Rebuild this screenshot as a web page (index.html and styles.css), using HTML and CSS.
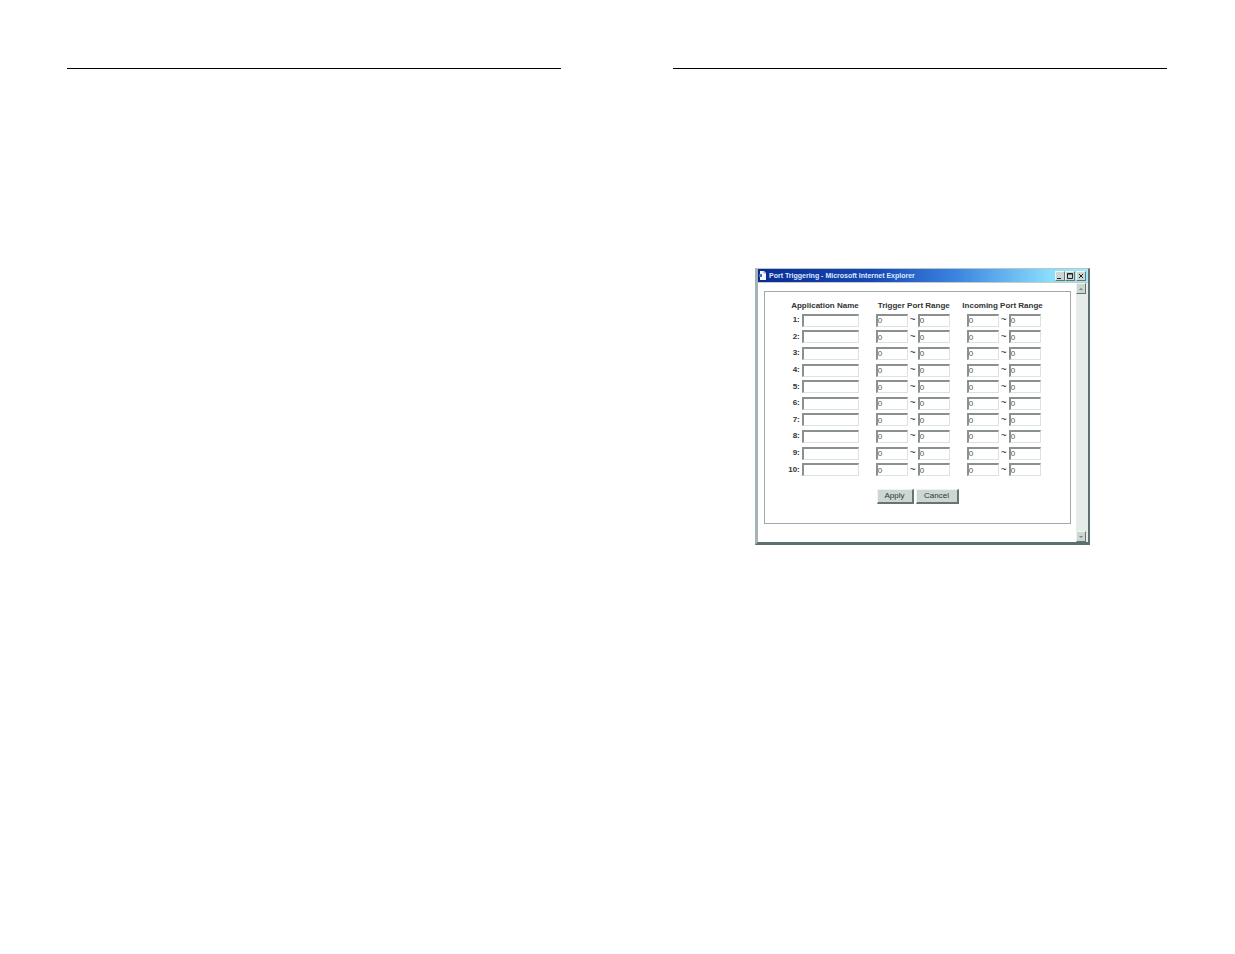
FILE: index.html
```html
<!DOCTYPE html>
<html lang="en">
<head>
    <meta charset="UTF-8">
    <title>Port Triggering</title>
    <link rel="stylesheet" href="styles.css">
</head>
<body>
<div class="spread">
    <section class="page"></section>
    <section class="page">
        <div class="window">
            <div class="title-bar">
                <svg class="title-icon" viewBox="0 0 9 11">
                    <path d="M2 1h4l2 2v7H2z" fill="#f4f8ff"></path>
                    <path d="M1 4h3v3H1z" fill="#3c6ccc"></path>
                    <path d="M6 1v2h2" fill="none" stroke="#8aa0d0"></path>
                </svg>
                <span class="title">Port Triggering - Microsoft Internet Explorer</span>
                <button class="win-btn" type="button" aria-label="Minimize">
                    <svg viewBox="0 0 8 8"><path d="M1 6.5h4" stroke="#1c2424"></path></svg>
                </button>
                <button class="win-btn" type="button" aria-label="Maximize">
                    <svg viewBox="0 0 8 8"><path d="M1.5 1.5h5v5h-5zM1 2h6" fill="none" stroke="#1c2424"></path></svg>
                </button>
                <button class="win-btn win-close" type="button" aria-label="Close">
                    <svg viewBox="0 0 8 8"><path d="M2 2l4 4M6 2l-4 4" stroke="#1c2424"></path></svg>
                </button>
            </div>
            <div class="viewport">
                <form class="panel">
                    <table class="ports">
                        <thead>
                        <tr>
                            <th>Application Name</th>
                            <th>Trigger Port Range</th>
                            <th>Incoming Port Range</th>
                        </tr>
                        </thead>
                        <tbody>
                        <tr>
                            <td><div class="field"><label for="app1">1:</label><input class="name" id="app1" type="text"></div></td>
                            <td><div class="field"><input aria-label="Trigger 1 from" type="text" value="0"><span>~</span><input aria-label="Trigger 1 to" type="text" value="0"></div></td>
                            <td><div class="field"><input aria-label="Incoming 1 from" type="text" value="0"><span>~</span><input aria-label="Incoming 1 to" type="text" value="0"></div></td>
                        </tr>
                        <tr>
                            <td><div class="field"><label for="app2">2:</label><input class="name" id="app2" type="text"></div></td>
                            <td><div class="field"><input aria-label="Trigger 2 from" type="text" value="0"><span>~</span><input aria-label="Trigger 2 to" type="text" value="0"></div></td>
                            <td><div class="field"><input aria-label="Incoming 2 from" type="text" value="0"><span>~</span><input aria-label="Incoming 2 to" type="text" value="0"></div></td>
                        </tr>
                        <tr>
                            <td><div class="field"><label for="app3">3:</label><input class="name" id="app3" type="text"></div></td>
                            <td><div class="field"><input aria-label="Trigger 3 from" type="text" value="0"><span>~</span><input aria-label="Trigger 3 to" type="text" value="0"></div></td>
                            <td><div class="field"><input aria-label="Incoming 3 from" type="text" value="0"><span>~</span><input aria-label="Incoming 3 to" type="text" value="0"></div></td>
                        </tr>
                        <tr>
                            <td><div class="field"><label for="app4">4:</label><input class="name" id="app4" type="text"></div></td>
                            <td><div class="field"><input aria-label="Trigger 4 from" type="text" value="0"><span>~</span><input aria-label="Trigger 4 to" type="text" value="0"></div></td>
                            <td><div class="field"><input aria-label="Incoming 4 from" type="text" value="0"><span>~</span><input aria-label="Incoming 4 to" type="text" value="0"></div></td>
                        </tr>
                        <tr>
                            <td><div class="field"><label for="app5">5:</label><input class="name" id="app5" type="text"></div></td>
                            <td><div class="field"><input aria-label="Trigger 5 from" type="text" value="0"><span>~</span><input aria-label="Trigger 5 to" type="text" value="0"></div></td>
                            <td><div class="field"><input aria-label="Incoming 5 from" type="text" value="0"><span>~</span><input aria-label="Incoming 5 to" type="text" value="0"></div></td>
                        </tr>
                        <tr>
                            <td><div class="field"><label for="app6">6:</label><input class="name" id="app6" type="text"></div></td>
                            <td><div class="field"><input aria-label="Trigger 6 from" type="text" value="0"><span>~</span><input aria-label="Trigger 6 to" type="text" value="0"></div></td>
                            <td><div class="field"><input aria-label="Incoming 6 from" type="text" value="0"><span>~</span><input aria-label="Incoming 6 to" type="text" value="0"></div></td>
                        </tr>
                        <tr>
                            <td><div class="field"><label for="app7">7:</label><input class="name" id="app7" type="text"></div></td>
                            <td><div class="field"><input aria-label="Trigger 7 from" type="text" value="0"><span>~</span><input aria-label="Trigger 7 to" type="text" value="0"></div></td>
                            <td><div class="field"><input aria-label="Incoming 7 from" type="text" value="0"><span>~</span><input aria-label="Incoming 7 to" type="text" value="0"></div></td>
                        </tr>
                        <tr>
                            <td><div class="field"><label for="app8">8:</label><input class="name" id="app8" type="text"></div></td>
                            <td><div class="field"><input aria-label="Trigger 8 from" type="text" value="0"><span>~</span><input aria-label="Trigger 8 to" type="text" value="0"></div></td>
                            <td><div class="field"><input aria-label="Incoming 8 from" type="text" value="0"><span>~</span><input aria-label="Incoming 8 to" type="text" value="0"></div></td>
                        </tr>
                        <tr>
                            <td><div class="field"><label for="app9">9:</label><input class="name" id="app9" type="text"></div></td>
                            <td><div class="field"><input aria-label="Trigger 9 from" type="text" value="0"><span>~</span><input aria-label="Trigger 9 to" type="text" value="0"></div></td>
                            <td><div class="field"><input aria-label="Incoming 9 from" type="text" value="0"><span>~</span><input aria-label="Incoming 9 to" type="text" value="0"></div></td>
                        </tr>
                        <tr>
                            <td><div class="field"><label for="app10">10:</label><input class="name" id="app10" type="text"></div></td>
                            <td><div class="field"><input aria-label="Trigger 10 from" type="text" value="0"><span>~</span><input aria-label="Trigger 10 to" type="text" value="0"></div></td>
                            <td><div class="field"><input aria-label="Incoming 10 from" type="text" value="0"><span>~</span><input aria-label="Incoming 10 to" type="text" value="0"></div></td>
                        </tr>
                        </tbody>
                    </table>
                    <div class="actions">
                        <button class="apply" type="button">Apply</button>
                        <button class="cancel" type="button">Cancel</button>
                    </div>
                </form>
                <div class="scrollbar">
                    <button type="button" aria-label="Scroll up">
                        <svg viewBox="0 0 8 8"><path d="M2 5h4L4 3z" fill="#788482"></path></svg>
                    </button>
                    <button type="button" aria-label="Scroll down">
                        <svg viewBox="0 0 8 8"><path d="M2 3h4L4 5z" fill="#788482"></path></svg>
                    </button>
                </div>
            </div>
        </div>
    </section>
</div>
</body>
</html>
```

FILE: styles.css
```css
* {
    box-sizing: border-box;
}

body {
    margin: 0;
    background: #ffffff;
    font-family: "Liberation Sans", Arial, sans-serif;
    font-size: 8px;
    line-height: 10px;
    color: #303434;
}

.spread {
    display: grid;
    grid-template-columns: 1fr 1fr;
    gap: 112px;
    padding: 68px 68px 0 67px;
}

.page {
    border-top: 1px solid #000000;
}

/* browser window */
.window {
    width: 335px;
    margin: 199px 0 0 82px;
    border: solid;
    border-width: 1px 2px 3px 3px;
    border-color: #b4c8cc #5c7072 #5c7072 #a4b4b4;
}

.title-bar {
    display: flex;
    align-items: center;
    height: 13px;
    padding-right: 2px;
    background: linear-gradient(to right, #0a2c90, #1848b4 35%, #3c84e0 60%, #88dcfc 88%, #a4e8fc);
}

.title-icon {
    width: 9px;
    height: 11px;
    margin-right: 2px;
}

.title {
    flex: 1;
    font-size: 7px;
    font-weight: bold;
    white-space: nowrap;
    color: #dceaff;
}

button {
    padding: 0;
    font: inherit;
    color: inherit;
    border: 1px solid;
    border-color: #eef4f2 #68746f #68746f #eef4f2;
    background: #ccd6d2;
}

.win-btn {
    width: 10px;
    height: 10px;
}

.win-close {
    margin-left: 1px;
}

button svg {
    display: block;
    width: 8px;
    height: 8px;
}

.viewport {
    display: flex;
    justify-content: space-between;
    border-top: 1px solid #c4cccc;
}

.panel {
    flex: 1;
    margin: 8px 5px 18px 6px;
    padding: 8px 0 19px;
    border: 1px solid #a0aaa8;
}

.ports {
    height: 178px;
    margin: 0 auto;
    border-collapse: collapse;
}

.ports th {
    height: 12px;
    padding: 0;
    text-align: right;
    white-space: nowrap;
}

.ports td {
    padding: 0 0 0 17px;
}

.ports td:first-child {
    padding-left: 0;
}

.ports th:last-child {
    padding-right: 4px;
}

.ports td:last-child {
    padding-right: 6px;
}

.field {
    display: flex;
    align-items: center;
    justify-content: flex-end;
}

.field label {
    margin-right: 2px;
    font-weight: bold;
}

.field span {
    width: 10px;
    font-size: 10px;
    line-height: 12px;
    text-align: center;
}

.field input {
    width: 32px;
    height: 13px;
    padding: 0;
    font: inherit;
    color: #505656;
    border: solid;
    border-width: 2px 1px 1px 2px;
    border-color: #8a908e #dce2e0 #dce2e0 #8a908e;
    border-radius: 0;
    background: #ffffff;
}

.field .name {
    width: 57px;
}

.actions {
    display: flex;
    justify-content: center;
    gap: 2px;
    margin-top: 11px;
}

.actions button {
    height: 15px;
    border-width: 1px 2px 2px 1px;
}

.apply {
    width: 37px;
}

.cancel {
    width: 43px;
}

.scrollbar {
    display: flex;
    flex-direction: column;
    justify-content: space-between;
    width: 12px;
    background: #e6ecea;
}

.scrollbar button {
    width: 10px;
    height: 11px;
}
```
